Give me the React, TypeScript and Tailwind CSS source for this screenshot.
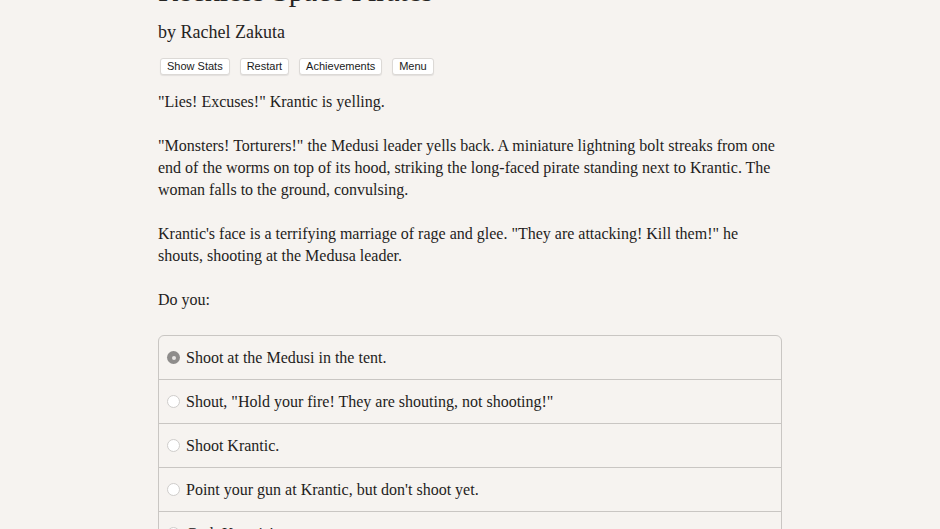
const choices = [
  "Shoot at the Medusi in the tent.",
  "Shout, \"Hold your fire! They are shouting, not shooting!\"",
  "Shoot Krantic.",
  "Point your gun at Krantic, but don't shoot yet.",
  "Grab Krantic's arm.",
];

function Radio({ checked }: { checked: boolean }) {
  return checked ? (
    <span className="flex h-[13px] w-[13px] shrink-0 items-center justify-center rounded-full bg-[#8e8c8b]">
      <span className="h-[4px] w-[4px] rounded-full bg-[#e8e6e4]" />
    </span>
  ) : (
    <span className="h-[13px] w-[13px] shrink-0 rounded-full border border-[#cfcdcb] bg-white" />
  );
}

export default function App() {
  const serif = "font-['Liberation_Serif','Times_New_Roman',serif]";

  return (
    <div className={`h-[529px] w-full overflow-hidden bg-[#f6f3f0] text-[#1f1d1c] ${serif}`}>
      <div className="mx-auto w-[624px] -mt-[27px]">
        {/* title, cut off at the top */}
        <h1 className="text-[30px] leading-[36px] text-[#262422]">Reckless Space Pirates</h1>
        <h2 className="mt-[10px] text-[18px] leading-[26px] text-[#262422]">by Rachel Zakuta</h2>

        <div className="mt-[13px] flex gap-[10px] pl-[2px] font-['Liberation_Sans',Arial,sans-serif] text-[11px]">
          {["Show Stats", "Restart", "Achievements", "Menu"].map((b) => (
            <button
              key={b}
              className="h-[17px] rounded-[3px] border border-[#dcd9d6] bg-white px-[6px] leading-[15px] text-[#1a1a1a] shadow-[0_1px_1px_rgba(0,0,0,0.08)]"
            >
              {b}
            </button>
          ))}
        </div>

        <div className="mt-[16px] space-y-[22px] text-[16px] leading-[22px]">
          <p>"Lies! Excuses!" Krantic is yelling.</p>
          <p>
            "Monsters! Torturers!" the Medusi leader yells back. A miniature lightning bolt streaks from one
            <br />
            end of the worms on top of its hood, striking the long-faced pirate standing next to Krantic. The
            <br />
            woman falls to the ground, convulsing.
          </p>
          <p>
            Krantic's face is a terrifying marriage of rage and glee. "They are attacking! Kill them!" he
            <br />
            shouts, shooting at the Medusa leader.
          </p>
          <p>Do you:</p>
        </div>

        <div className="mt-[24px] overflow-hidden rounded-t-[6px] border border-[#c9c6c3] text-[16px]">
          {choices.map((c, i) => (
            <div
              key={c}
              className={`flex items-center gap-[6px] pl-[8px] ${i > 0 ? "h-[44px] border-t border-[#c9c6c3]" : "h-[43px]"}`}
            >
              <Radio checked={i === 0} />
              <span>{c}</span>
            </div>
          ))}
        </div>
      </div>
    </div>
  );
}
